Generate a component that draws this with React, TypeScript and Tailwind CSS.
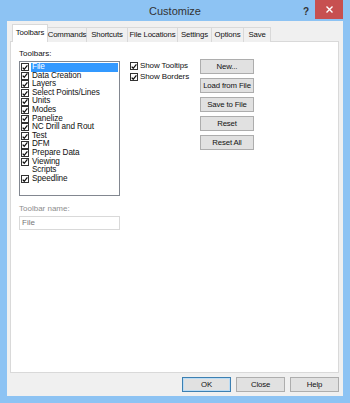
const font = { fontFamily: '"Liberation Sans", Arial, sans-serif' };

const toolbars = [
  { name: "File", on: true },
  { name: "Data Creation", on: true },
  { name: "Layers", on: true },
  { name: "Select Points/Lines", on: true },
  { name: "Units", on: true },
  { name: "Modes", on: true },
  { name: "Panelize", on: true },
  { name: "NC Drill and Rout", on: true },
  { name: "Test", on: true },
  { name: "DFM", on: true },
  { name: "Prepare Data", on: true },
  { name: "Viewing", on: true },
  { name: "Scripts", on: false },
  { name: "Speedline", on: true },
];

const tabs = [
  { label: "Commands", w: "w-[39px]" },
  { label: "Shortcuts", w: "w-[41px]" },
  { label: "File Locations", w: "w-[50px]" },
  { label: "Settings", w: "w-[34px]" },
  { label: "Options", w: "w-[32px]" },
  { label: "Save", w: "w-[27px]" },
];

function Check({ on, boxed = false }: { on: boolean; boxed?: boolean }) {
  return (
    <span
      className={`flex items-center justify-center w-[8px] h-[8px] shrink-0 ${
        boxed ? "border border-[#333] bg-white" : ""
      }`}
    >
      {on && (
        <svg width="7" height="7" viewBox="0 0 7 7">
          <path d="M0.8 3.6 L2.6 5.6 L6.3 1" fill="none" stroke="#111" strokeWidth="1.5" />
        </svg>
      )}
    </span>
  );
}

function Btn({ children, def = false }: { children: React.ReactNode; def?: boolean }) {
  return (
    <div
      className={`flex items-center justify-center h-[15px] bg-[#e1e1e1] border text-[7.8px] tracking-[-0.15px] text-[#111] whitespace-nowrap ${
        def ? "border-[#3c7fb1] shadow-[inset_0_0_0_1px_#bcdcf4]" : "border-[#adadad]"
      }`}
    >
      {children}
    </div>
  );
}

export default function App() {
  return (
    <div style={font} className="w-[350px] h-[403px] bg-[#8dc3f3] flex flex-col overflow-hidden">
      {/* Title bar */}
      <div className="relative h-[21px] flex items-center justify-center">
        <span className="text-[11px] text-[#333] mt-[2px]">Customize</span>
        <span className="absolute right-[41px] top-[4px] text-[10px] font-bold text-[#333]">?</span>
        <div className="absolute right-[7px] top-0 w-[28px] h-[19px] bg-[#c75050] flex items-center justify-center">
          <svg width="7" height="7" viewBox="0 0 7 7">
            <path d="M0.5 0.5 L6.5 6.5 M6.5 0.5 L0.5 6.5" stroke="#fff" strokeWidth="1.4" />
          </svg>
        </div>
      </div>

      {/* Client area */}
      <div className="flex-1 mx-[7px] mb-[7px] bg-[#f0f0f0] flex flex-col pl-[3px] pr-[4px] pt-[3px]">
        {/* Tabs */}
        <div className="flex items-end h-[18px] pl-[2px] relative z-10">
          <div className="w-[36px] h-[18px] bg-white border border-b-0 border-[#d9d9d9] flex items-center justify-center text-[7.8px] tracking-[-0.15px] text-[#111] pb-[1px]">
            Toolbars
          </div>
          {tabs.map((t) => (
            <div
              key={t.label}
              className={`${t.w} h-[15px] bg-[#f0f0f0] border border-l-0 border-[#d9d9d9] border-b-0 flex items-center justify-center text-[7.8px] tracking-[-0.15px] text-[#111] whitespace-nowrap`}
            >
              {t.label}
            </div>
          ))}
        </div>

        {/* Tab panel */}
        <div className="h-[332px] -mt-px bg-white border border-[#d9d9d9] pl-[8px] pt-[7px] flex gap-[10px]">
          <div className="flex flex-col w-[101px]">
            <span className="text-[8px] text-[#111] leading-[10px]">Toolbars:</span>
            <div className="mt-[2px] h-[135px] border border-[#828790] bg-white pl-[1px] pt-[1px]">
              {toolbars.map((t, i) => (
                <div key={t.name} className="flex items-center h-[8.6px] gap-[2px]">
                  <Check on={t.on} boxed={t.on} />
                  <span
                    className={`flex-1 text-[8.2px] tracking-[-0.1px] leading-[8.6px] pl-[1px] whitespace-nowrap ${
                      i === 0 ? "bg-[#3399ff] text-white mr-[1px]" : "text-[#111]"
                    }`}
                  >
                    {t.name}
                  </span>
                </div>
              ))}
            </div>
            <span className="mt-[8px] text-[8px] text-[#8d8d8d] leading-[10px]">Toolbar name:</span>
            <div className="mt-[2px] h-[14px] border border-[#d9d9d9] bg-white flex items-center pl-[2px] text-[8px] text-[#777]">
              File
            </div>
          </div>

          <div className="flex flex-col gap-[3px] pt-[13px] w-[60px]">
            <div className="flex items-center gap-[2px] h-[8px]">
              <Check on boxed />
              <span className="text-[8px] leading-[8px] tracking-[-0.1px] text-[#111] whitespace-nowrap">Show Tooltips</span>
            </div>
            <div className="flex items-center gap-[2px] h-[8px]">
              <Check on boxed />
              <span className="text-[8px] leading-[8px] tracking-[-0.1px] text-[#111] whitespace-nowrap">Show Borders</span>
            </div>
          </div>

          <div className="flex flex-col gap-[4px] pt-[10px] w-[54px]">
            <Btn>New...</Btn>
            <Btn>Load from File</Btn>
            <Btn>Save to File</Btn>
            <Btn>Reset</Btn>
            <Btn>Reset All</Btn>
          </div>
        </div>

        {/* Bottom buttons */}
        <div className="flex justify-end gap-[5px] mt-[4px]">
          <div className="w-[49px]"><Btn def>OK</Btn></div>
          <div className="w-[49px]"><Btn>Close</Btn></div>
          <div className="w-[49px]"><Btn>Help</Btn></div>
        </div>
      </div>
    </div>
  );
}
